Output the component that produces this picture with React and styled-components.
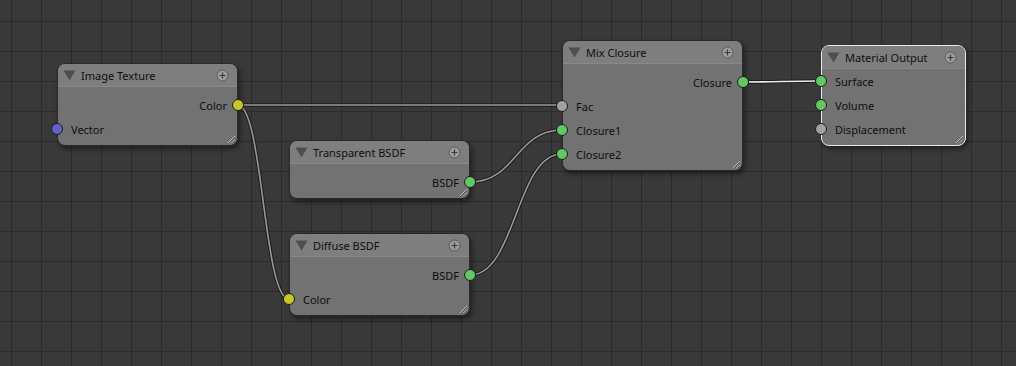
import React from 'react';
import styled, { createGlobalStyle } from 'styled-components';

const GlobalStyle = createGlobalStyle`
  html, body {
    margin: 0;
    padding: 0;
    background: #393939;
    overflow: hidden;
  }
`;

const SOCKET = {
  color: '#c7c729',
  vector: '#6363c7',
  shader: '#63c763',
  float: '#a1a1a1',
};

const Canvas = styled.div`
  position: relative;
  width: 1016px;
  height: 366px;
  background-color: #393939;
  background-image:
    linear-gradient(to right, #2b2b2b 1px, transparent 1px),
    linear-gradient(to bottom, #2b2b2b 1px, transparent 1px);
  background-size: 30px 30px;
  background-position: 11px 21px;
  font-family: "Noto Sans", "Open Sans", sans-serif;
  overflow: hidden;
`;

const Wires = styled.svg`
  position: absolute;
  left: 0;
  top: 0;
  width: 1016px;
  height: 366px;
`;

// nodes sit on a free canvas, so their place is given by props
const NodeBox = styled.div`
  position: absolute;
  left: ${p => p.$x}px;
  top: ${p => p.$y}px;
  width: ${p => p.$w}px;
  box-sizing: border-box;
  border: 1px solid ${p => (p.$active ? '#e8e8e8' : '#2a2a2a')};
  border-radius: 8px;
  background: #727272;
  box-shadow: 2px 3px 5px rgba(0, 0, 0, 0.45);
`;

const Header = styled.div`
  display: flex;
  align-items: center;
  height: 23px;
  box-sizing: border-box;
  padding: 0 8px 0 5px;
  background: #7e7e7e;
  border-radius: 7px 7px 0 0;
  border-bottom: 1px solid #898989;
`;

const Title = styled.span`
  flex: 1;
  margin-left: 5px;
  padding-top: 1px;
  font-size: 11px;
  color: #0e0e0e;
  white-space: nowrap;
`;

const Body = styled.div`
  padding: ${p => p.$pt}px 0 4px;
`;

const Row = styled.div`
  position: relative;
  display: flex;
  align-items: center;
  justify-content: ${p => (p.$out ? 'flex-end' : 'flex-start')};
  height: 24px;
  padding: ${p => (p.$out ? '0 10px 0 0' : '0 0 0 13px')};
  font-size: 11px;
  color: #0e0e0e;
`;

const Socket = styled.span`
  position: absolute;
  top: 6px;
  ${p => (p.$out ? 'right: -7px;' : 'left: -7px;')}
  width: 10px;
  height: 10px;
  border-radius: 50%;
  background: ${p => p.$c};
  border: 1px solid #1c1c1c;
`;

const Grip = styled.svg`
  position: absolute;
  right: 2px;
  bottom: 2px;
`;

const Collapse = () => (
  <svg width="13" height="11" viewBox="0 0 13 11">
    <path d="M0.5 0.5 H12.5 L6.5 10.5 Z" fill="#4e4e4e" />
  </svg>
);

const Plus = () => (
  <svg width="13" height="13" viewBox="0 0 13 13">
    <circle cx="6.5" cy="6.5" r="5.5" fill="#9c9c9c" stroke="#5a5a5a" strokeWidth="1" />
    <path d="M6.5 3.5 V9.5 M3.5 6.5 H9.5" stroke="#3a3a3a" strokeWidth="1.2" />
  </svg>
);

const Node = ({ x, y, w = 181, title, outputs = [], inputs = [], pt = 6, active }) => (
  <NodeBox $x={x} $y={y} $w={w} $active={active}>
    <Header>
      <Collapse />
      <Title>{title}</Title>
      <Plus />
    </Header>
    <Body $pt={pt}>
      {outputs.map(s => (
        <Row key={s.name} $out>
          {s.name}
          <Socket $out $c={SOCKET[s.type]} />
        </Row>
      ))}
      {inputs.map(s => (
        <Row key={s.name}>
          <Socket $c={SOCKET[s.type]} />
          {s.name}
        </Row>
      ))}
    </Body>
    <Grip width="8" height="8" viewBox="0 0 8 8">
      <path d="M1 8 L8 1 M4.5 8 L8 4.5" stroke="#c4c4c4" strokeWidth="1" />
      <path d="M2 8 L8 2 M5.5 8 L8 5.5" stroke="#4a4a4a" strokeWidth="0.8" />
    </Grip>
  </NodeBox>
);

const curve = (x1, y1, x2, y2) => {
  const h = Math.abs(x2 - x1) * 0.5;
  return `M${x1} ${y1} C${x1 + h} ${y1}, ${x2 - h} ${y2}, ${x2} ${y2}`;
};

const links = [
  { d: curve(237.5, 105, 562, 105) },
  { d: curve(237.5, 105, 289, 299) },
  { d: curve(470, 182, 562, 130) },
  { d: curve(470, 275, 562, 154) },
  { d: curve(743, 82, 821, 81), hot: true },
];

const App = () => (
  <>
    <GlobalStyle />
    <Canvas>
      <Wires viewBox="0 0 1016 366">
        {links.map((l, i) => (
          <g key={i} fill="none">
            <path d={l.d} stroke="#1c1c1c" strokeWidth="3.6" />
            <path d={l.d} stroke={l.hot ? '#ececec' : '#9a9a9a'} strokeWidth="1.6" />
          </g>
        ))}
      </Wires>

      <Node
        x={57}
        y={63}
        title="Image Texture"
        outputs={[{ name: 'Color', type: 'color' }]}
        inputs={[{ name: 'Vector', type: 'vector' }]}
      />
      <Node
        x={289}
        y={140}
        title="Transparent BSDF"
        outputs={[{ name: 'BSDF', type: 'shader' }]}
      />
      <Node
        x={289}
        y={233}
        title="Diffuse BSDF"
        outputs={[{ name: 'BSDF', type: 'shader' }]}
        inputs={[{ name: 'Color', type: 'color' }]}
      />
      <Node
        x={562}
        y={40}
        title="Mix Closure"
        outputs={[{ name: 'Closure', type: 'shader' }]}
        inputs={[
          { name: 'Fac', type: 'float' },
          { name: 'Closure1', type: 'shader' },
          { name: 'Closure2', type: 'shader' },
        ]}
      />
      <Node
        x={821}
        y={45}
        w={145}
        pt={0}
        active
        title="Material Output"
        inputs={[
          { name: 'Surface', type: 'shader' },
          { name: 'Volume', type: 'shader' },
          { name: 'Displacement', type: 'float' },
        ]}
      />
    </Canvas>
  </>
);

export default App;
